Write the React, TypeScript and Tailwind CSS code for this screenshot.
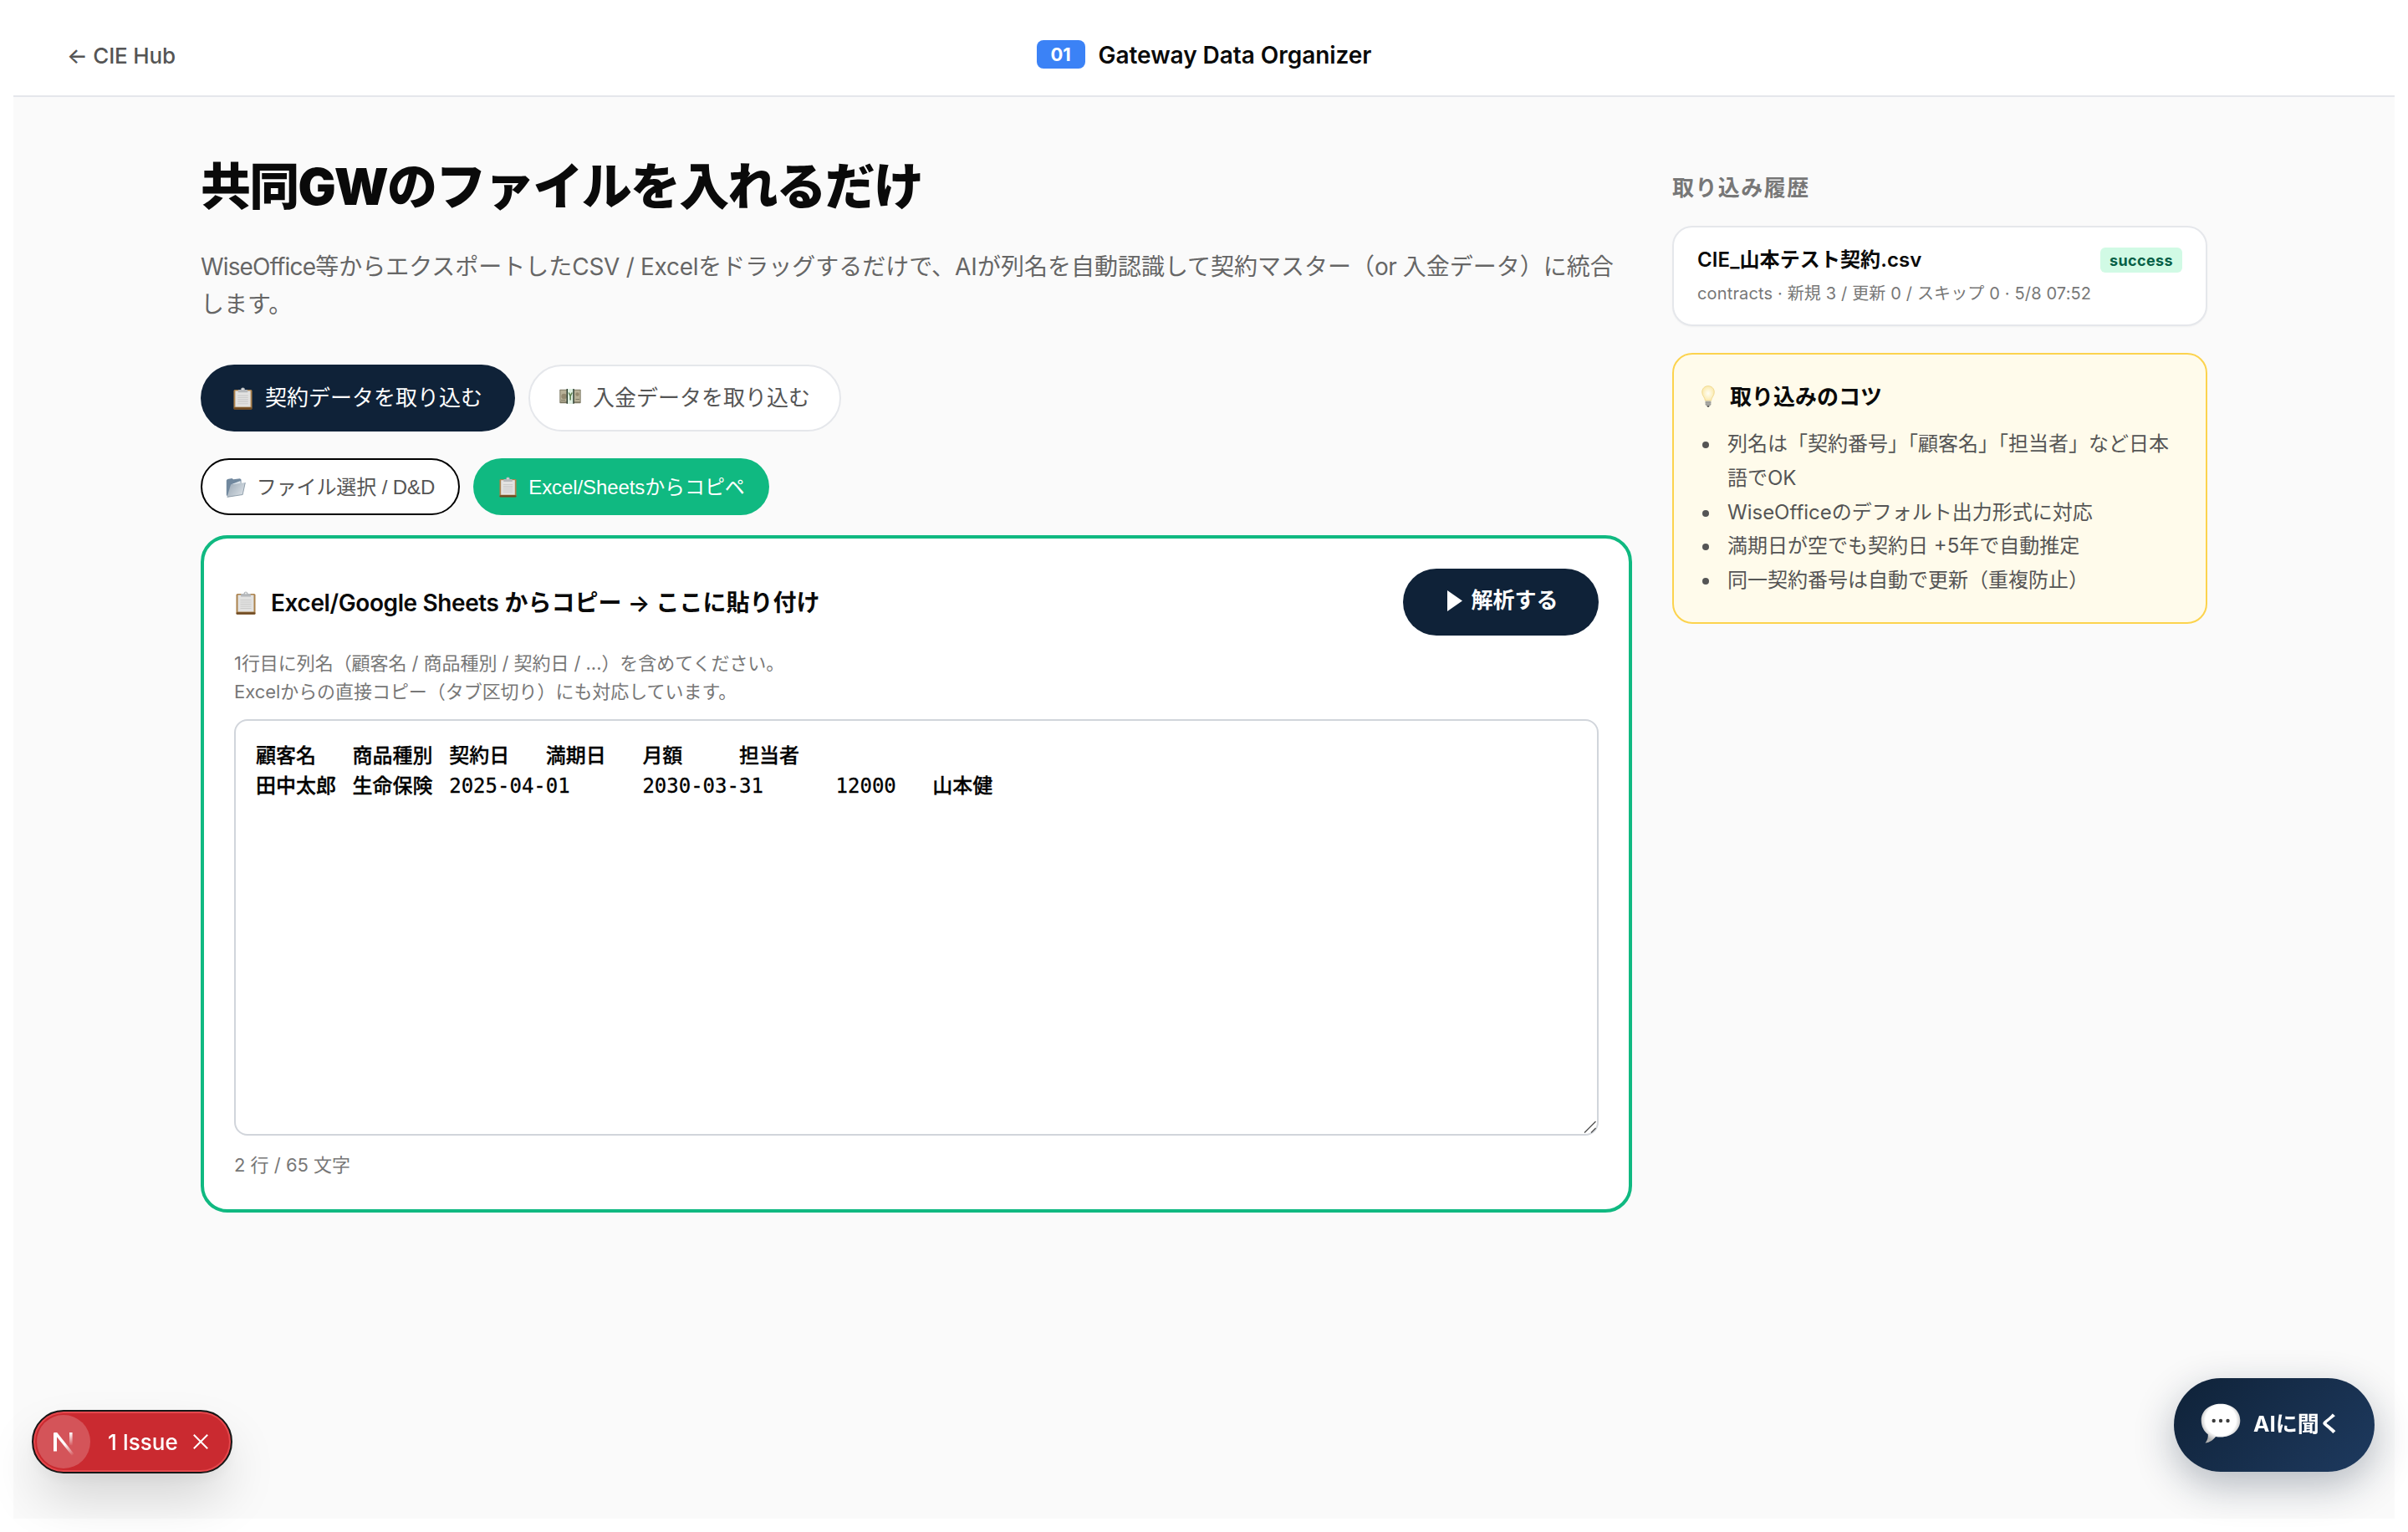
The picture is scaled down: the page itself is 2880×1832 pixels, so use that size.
import type { ReactNode } from "react";

const CJK = "font-['Inter','Noto_Sans_CJK_JP',sans-serif]";
const BTN = "font-['Liberation_Sans','Noto_Sans_CJK_JP',sans-serif]";

const ClipboardIcon = ({ className }: { className?: string }) => (
  <svg viewBox="0 0 24 28" className={className}>
    <rect x="0.500" y="3" width="23" height="24.500" rx="1.600" fill="#ab824d" />
    <rect x="0.500" y="25.200" width="23" height="2.500" rx="1" fill="#6f4a22" />
    <rect x="2.500" y="4.500" width="19" height="20" fill="#e2e2e1" />
    <path d="M5.5 10.5h13M5.5 13h13M5.5 15.5h13M5.5 18h13M5.5 20.5h13" stroke="#cccccb" strokeWidth="1.200" />
    <path d="M6 6.500V4.200c0-.8.6-1.200 1.400-1.200h2C9.600 1.200 10.600.4 12 .4s2.400.8 2.600 2.600h2c.8 0 1.400.4 1.400 1.200v2.300z" fill="#b5b8bb" />
    <circle cx="12" cy="2.500" r="0.900" fill="#f4f4f4" />
  </svg>
);

const MoneyIcon = ({ className }: { className?: string }) => (
  <svg viewBox="0 0 26 18" className={className}>
    <rect x="0.300" y="0.700" width="25.400" height="16.500" rx="0.800" fill="#7f7b66" />
    <rect x="1.300" y="1.700" width="23.400" height="13.600" fill="#b8b197" />
    <circle cx="5.600" cy="9" r="3.200" fill="#93896f" />
    <circle cx="21.500" cy="6.500" r="2.200" fill="#93896f" />
    <path d="M2 13.500h5M19.500 12.500h4.500" stroke="#7f7b66" strokeWidth="1.200" />
    <rect x="9.200" y="0" width="7.800" height="17.800" fill="#dff0e2" />
    <path d="M9.300 0v17.800M17 0v17.800" stroke="#26382b" strokeWidth="1.400" />
    <path d="M11.200 4.500l2 4 2-4M13.200 8.500v5" stroke="#5b7f4c" strokeWidth="1.500" fill="none" />
  </svg>
);

const FolderIcon = ({ className }: { className?: string }) => (
  <svg viewBox="0 0 24 24" className={className}>
    <path d="M.8 3.500 2 2l5.500-1L9 2.200l8-1 1.500 1.300v5L2 22.500.8 21z" fill="#71889e" />
    <path d="M6 8.500 17.500 4l.5 4z" fill="#dde5ec" />
    <path d="M6 8.500 23.500 6 20.200 20.500 1.500 23.500z" fill="url(#folderFront)" />
    <path d="M23.300 6.200 20.200 20.500 1.700 23.400" fill="none" stroke="#6f8191" strokeWidth="0.700" />
    <defs>
      <linearGradient id="folderFront" x1="0" y1="0" x2="1" y2="0.600">
        <stop stopColor="#98a6b3" />
        <stop offset="1" stopColor="#d6dde3" />
      </linearGradient>
    </defs>
  </svg>
);

const BulbIcon = ({ className }: { className?: string }) => (
  <svg viewBox="0 0 16 26" className={className}>
    <path
      d="M8 .6c4.200 0 7.300 3.200 7.300 7.300 0 4.300-3.300 6-3.800 10.300h-7C4 13.900.7 12.200.7 7.900.7 3.800 3.800.6 8 .6z"
      fill="url(#bulbGlass)"
      stroke="#edd486"
      strokeWidth="0.800"
    />
    <path d="M4.600 18.400h6.800v4c0 1.200-1.400 2.600-3.400 2.600s-3.400-1.400-3.400-2.600z" fill="#b4b4ae" />
    <path d="M4.600 20.200h6.800M4.800 22.300h6.400" stroke="#85857f" strokeWidth="0.700" />
    <path d="M6.400 24h3.200l-.8 1.700H7.200z" fill="#4c4c4c" />
    <defs>
      <radialGradient id="bulbGlass">
        <stop stopColor="#fffef6" />
        <stop offset="1" stopColor="#fbeaae" />
      </radialGradient>
    </defs>
  </svg>
);

const ChatIcon = ({ className }: { className?: string }) => (
  <svg viewBox="0 0 48 48" className={className}>
    <path
      d="M24 .7c13 0 23.300 8 23.300 19.800S37 40.500 24 40.500c-2 0-4-.1-6-.6-2.500 3.500-7 7-12.500 7.600 2.500-2.700 3.600-6.300 3.300-10.200C3.800 33.500.7 27.500.7 20.500.7 8.700 11 .7 24 .7z"
      fill="url(#bubble)"
    />
    <g fill="#3c3c3c">
      <circle cx="15.700" cy="21" r="2.200" />
      <circle cx="24" cy="21" r="2.200" />
      <circle cx="32.500" cy="21" r="2.200" />
    </g>
    <defs>
      <radialGradient id="bubble" cx="0.500" cy="0.420" r="0.560">
        <stop offset="0.700" stopColor="#fff" />
        <stop offset="1" stopColor="#b0b0b0" />
      </radialGradient>
    </defs>
  </svg>
);

const NextLogo = () => (
  <svg viewBox="0 0 64 64" className="w-16 h-16 shrink-0">
    <circle cx="32" cy="32" r="32" fill="#fff" fillOpacity="0.200" />
    <path d="M22 43.500V22" stroke="#fff" strokeWidth="4" />
    <path d="M20 21h4.200L44.500 46.500l-2.400 2.200L21 22.500z" fill="url(#nextDiagonal)" />
    <path d="M40.800 21v15.500" stroke="url(#nextRight)" strokeWidth="3.600" />
    <defs>
      <linearGradient id="nextDiagonal" gradientUnits="userSpaceOnUse" x1="33" y1="35" x2="44" y2="48">
        <stop stopColor="#fff" />
        <stop offset="1" stopColor="#fff" stopOpacity="0" />
      </linearGradient>
      <linearGradient id="nextRight" gradientUnits="userSpaceOnUse" x1="41" y1="21" x2="41" y2="37">
        <stop stopColor="#fff" />
        <stop offset="1" stopColor="#fff" stopOpacity="0" />
      </linearGradient>
    </defs>
  </svg>
);

const Header = () => (
  <header className="grid grid-cols-3 items-center h-[100px] px-16 bg-white border-b-2 border-[#e5e7eb]">
    <a className="pt-[2px] text-[26px] font-medium tracking-[-0.2px] text-[#555] whitespace-nowrap">
      ← CIE Hub
    </a>
    <div className="flex items-center justify-center gap-4">
      <span className="flex items-center justify-center w-[58px] h-[34px] pt-[1px] rounded-lg bg-[#3b82f6] text-white text-[22px] font-bold">
        01
      </span>
      <span className="pt-[2px] text-[28px] font-semibold tracking-[-0.05px] whitespace-nowrap">
        Gateway Data Organizer
      </span>
    </div>
  </header>
);

const PastePanel = () => {
  const text =
    "顧客名\t商品種別\t契約日\t満期日\t月額\t担当者\n田中太郎\t生命保険\t2025-04-01\t2030-03-31\t12000\t山本健";

  return (
    <section className="h-[810px] mt-6 px-9 pt-9 bg-white border-4 border-[#10b981] rounded-[32px]">
      <div className="flex items-center justify-between">
        <h3 className="flex items-center pt-[2px] text-[28px] font-semibold whitespace-nowrap">
          <ClipboardIcon className="w-6 h-7 ml-[2px] mr-[18px]" />
          <span>
            <span className="tracking-[-0.4px]">Excel/Google Sheets</span> からコピー → ここに貼り付け
          </span>
        </h3>
        <button
          className={`flex items-center justify-center w-[234px] h-20 pl-[5px] pb-[3px] rounded-full bg-[#0f2238] text-white text-[26px] font-bold ${BTN}`}
        >
          <svg viewBox="0 0 18 25" className="w-[18px] h-[25px] mr-[10px]">
            <path d="M0 0 18 12.500 0 25z" fill="currentColor" />
          </svg>
          解析する
        </button>
      </div>
      <p className="mt-4 text-[22px] leading-[34px] tracking-[-0.05px] text-[#777]">
        1行目に列名（顧客名 / 商品種別 / 契約日 / ...）を含めてください。
        <br />
        Excelからの直接コピー（タブ区切り）にも対応しています。
      </p>
      <div className="relative mt-4">
        <textarea
          readOnly
          value={text}
          className="block w-full h-[498px] p-6 resize-none bg-white border-2 border-[#d1d5db] rounded-2xl text-[24px] leading-9 font-medium text-black [tab-size:8] [-webkit-text-stroke:0.3px_black] outline-none overflow-hidden font-['DejaVu_Sans_Mono','Noto_Sans_CJK_JP',monospace]"
        />
        <svg viewBox="0 0 16 16" className="absolute right-[2px] bottom-[2px] w-4 h-4">
          <path d="M1 14.500 14.500 1M9 14.500 14.500 9" stroke="#555" strokeWidth="1.400" />
        </svg>
      </div>
      <div className="mt-[19px] text-[22px] leading-8 text-[#777]">2 行 / 65 文字</div>
    </section>
  );
};

const Tip = ({ children }: { children: ReactNode }) => (
  <li className="flex">
    <span className="shrink-0 w-2 h-2 mt-[17px] ml-[6px] mr-[22px] rounded-full bg-[#555]" />
    <span>{children}</span>
  </li>
);

const Sidebar = () => (
  <aside className="w-[640px] pt-7">
    <h2 className="text-[26px] leading-[42px] font-bold tracking-[0.055em] text-[#777]">
      取り込み履歴
    </h2>
    <div className="mt-6 h-[120px] px-7 pt-[21px] bg-white border-2 border-[#e5e7eb] rounded-3xl shadow-[0_1px_2px_rgba(0,0,0,0.04)]">
      <div className="flex items-center justify-between h-9">
        <span className="text-[24px] font-semibold tracking-[0.1px]">CIE_山本テスト契約.csv</span>
        <span className="flex items-center justify-center w-[98px] h-[30px] rounded-md bg-[#d1fae5] text-[#065f46] text-[18px] font-bold tracking-[0.02em]">
          success
        </span>
      </div>
      <div className="mt-1 text-[20px] leading-9 text-[#777] whitespace-nowrap tracking-[0.15px]">
        contracts · 新規 3 / 更新 0 / スキップ 0 · 5/8 07:52
      </div>
    </div>
    <div className="mt-8 h-[324px] px-7 pt-[30px] bg-[#fffbeb] border-2 border-[#fcd34d] rounded-3xl">
      <h3 className="flex items-center h-10 text-[26px] font-bold">
        <BulbIcon className="w-4 h-[26px] ml-[5px] mr-[18px]" />
        取り込みのコツ
      </h3>
      <ul className="mt-[17px] text-[24px] leading-[40.8px] text-[#555]">
        <Tip>列名は「契約番号」「顧客名」「担当者」など日本語でOK</Tip>
        <Tip>WiseOfficeのデフォルト出力形式に対応</Tip>
        <Tip>満期日が空でも契約日 +5年で自動推定</Tip>
        <Tip>同一契約番号は自動で更新（重複防止）</Tip>
      </ul>
    </div>
  </aside>
);

export default function App() {
  return (
    <div className={`h-[1832px] p-4 bg-white text-[#0a0a0a] overflow-hidden ${CJK}`} lang="ja">
      <div className="h-[1800px] bg-[#fafafa]">
        <Header />
        <main className="flex gap-12 w-[2400px] mx-auto pt-[60px]">
          <div className="w-[1712px]">
            <h1 className="h-[96px] text-[60px] leading-[94px] font-black tracking-[-0.03em] whitespace-nowrap">
              共同GWのファイルを入れるだけ
            </h1>
            <p className="h-[90px] mt-6 pt-[1px] text-[28px] leading-[44.8px] text-[#666]">
              <span className="tracking-[-0.85px]">WiseOffice</span>等からエクスポートした
              <span className="tracking-[-0.3px]">CSV / Excel</span>
              をドラッグするだけで、AIが列名を自動認識して契約マスター（
              <span className="tracking-[-0.5px]">or </span>入金データ）に統合します。
            </p>
            <div className={`flex gap-4 mt-[50px] text-[26px] ${BTN}`}>
              <button className="flex items-center justify-center w-[376px] h-20 rounded-full bg-[#0f2238] text-white">
                <ClipboardIcon className="w-[23px] h-[27px] mr-[15px]" />
                契約データを取り込む
              </button>
              <button className="flex items-center justify-center w-[374px] h-20 rounded-full bg-white border-2 border-[#e5e7eb] text-[#555]">
                <MoneyIcon className="w-[26px] h-[18px] mr-[14px] -mt-1" />
                入金データを取り込む
              </button>
            </div>
            <div className={`flex gap-4 mt-8 text-[24px] ${BTN}`}>
              <button className="flex items-center justify-center w-[310px] h-[68px] pt-[1px] rounded-full bg-white border-2 border-black text-[#555]">
                <FolderIcon className="w-6 h-6 mr-[13px]" />
                <span className="tracking-[-0.1px]">ファイル選択 / D&amp;D</span>
              </button>
              <button className="flex items-center justify-center w-[354px] h-[68px] pt-[1px] pl-[2px] rounded-full bg-[#10b981] text-white">
                <ClipboardIcon className="w-[21px] h-[25px] mr-[14px]" />
                <span className="tracking-[-0.1px]">Excel/Sheetsからコピペ</span>
              </button>
            </div>
            <PastePanel />
          </div>
          <Sidebar />
        </main>
      </div>

      {/* dev overlay badge */}
      <div className="fixed left-[38px] top-[1686px] flex items-center w-[240px] h-[76px] pl-1 rounded-full bg-[#ca2a30] border-2 border-[#171717] shadow-[inset_0_0_0_2px_#e5484d,0_32px_64px_-8px_rgba(0,0,0,0.18),0_8px_16px_rgba(0,0,0,0.04)] text-white">
        <NextLogo />
        <span className="ml-[21px] text-[26px] font-medium whitespace-nowrap">1 Issue</span>
        <svg viewBox="0 0 18 18" className="w-[18px] h-[18px] ml-[18px]">
          <path d="M.8.8l16.400 16.400M17.200.8.8 17.200" stroke="currentColor" strokeWidth="2" />
        </svg>
      </div>

      <button className="fixed left-[2600px] top-[1648px] flex items-center w-[240px] h-[112px] pl-8 pb-1 rounded-full bg-[linear-gradient(135deg,#0f2238,#1e3a5f)] shadow-[0_16px_48px_rgba(15,34,56,0.3)] text-white text-[26px] font-bold">
        <ChatIcon className="w-12 h-12 mr-[15px]" />
        AIに聞く
      </button>
    </div>
  );
}
